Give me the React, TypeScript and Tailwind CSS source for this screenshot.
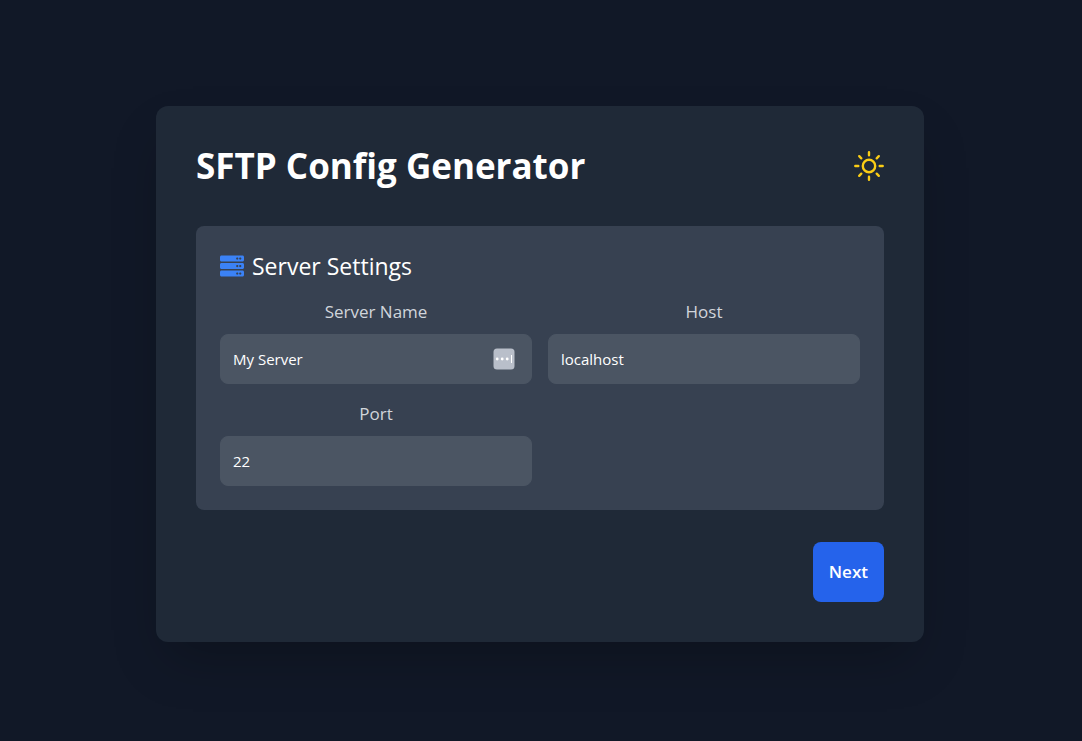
import { useState } from "react";
import { FaServer } from "react-icons/fa";

const fieldClass =
  "block w-full rounded-lg border border-[#4b5563] bg-[#4b5563] p-3 text-[15px] leading-6 text-white outline-none focus:border-[#3b82f6]";
const labelClass = "mb-2 block text-center text-[17px] leading-7 text-[#d1d5db]";

function SunIcon() {
  return (
    <svg viewBox="0 0 30 30" className="size-[30px]" fill="none" stroke="currentColor" strokeWidth="2.4" strokeLinecap="round" aria-hidden="true">
      <circle cx="15" cy="15" r="6.2" />
      <path d="M15 1.3v3M15 25.7v3M1.3 15h3M25.7 15h3M5.2 5.2l2.1 2.1M22.7 22.7l2.1 2.1M5.2 24.8l2.1-2.1M22.7 7.3l2.1-2.1" />
    </svg>
  );
}

function AutofillIcon() {
  return (
    <svg viewBox="0 0 22 22" className="size-[22px]" aria-hidden="true">
      <rect x="0.5" y="0.5" width="21" height="21" rx="3.5" fill="#b9bfca" />
      <circle cx="4.2" cy="11" r="1.4" fill="#fff" />
      <circle cx="9.2" cy="11" r="1.4" fill="#fff" />
      <circle cx="14.2" cy="11" r="1.4" fill="#fff" />
      <rect x="18" y="7" width="1" height="8" fill="#fff" />
    </svg>
  );
}

export default function App() {
  const [name, setName] = useState("My Server");
  const [host, setHost] = useState("localhost");
  const [port, setPort] = useState("22");

  return (
    <div className="flex min-h-screen items-center justify-center bg-[#111827] pt-[7px] pr-0.5 font-['Open_Sans','Noto_Sans',sans-serif] text-white">
      <main className="w-full max-w-3xl rounded-xl bg-[#1f2937] p-10 shadow-2xl">
        <header className="mb-10 flex items-center justify-between">
          <h1 className="text-[35px] leading-10 font-bold">SFTP Config Generator</h1>
          <button type="button" aria-label="Toggle theme" className="text-[#facc15]">
            <SunIcon />
          </button>
        </header>

        <form onSubmit={(e) => e.preventDefault()}>
          <section className="rounded-lg bg-[#374151] p-6">
            <h2 className="mb-4 flex items-center gap-2 text-[23px] leading-8">
              <FaServer className="size-6 text-[#3b82f6]" />
              Server Settings
            </h2>
            <div className="grid grid-cols-2 gap-4">
              <div>
                <label htmlFor="name" className={labelClass}>Server Name</label>
                <div className="relative">
                  <input id="name" type="text" value={name} onChange={(e) => setName(e.target.value)} className={fieldClass} />
                  <span className="pointer-events-none absolute inset-y-0 right-[17px] flex items-center">
                    <AutofillIcon />
                  </span>
                </div>
              </div>
              <div>
                <label htmlFor="host" className={labelClass}>Host</label>
                <input id="host" type="text" value={host} onChange={(e) => setHost(e.target.value)} className={fieldClass} />
              </div>
              <div>
                <label htmlFor="port" className={labelClass}>Port</label>
                <input id="port" type="text" value={port} onChange={(e) => setPort(e.target.value)} className={fieldClass} />
              </div>
            </div>
          </section>

          <div className="mt-8 flex justify-end">
            <button type="submit" className="rounded-lg bg-[#2563eb] p-4 text-[17px] leading-7 font-semibold">
              Next
            </button>
          </div>
        </form>
      </main>
    </div>
  );
}
